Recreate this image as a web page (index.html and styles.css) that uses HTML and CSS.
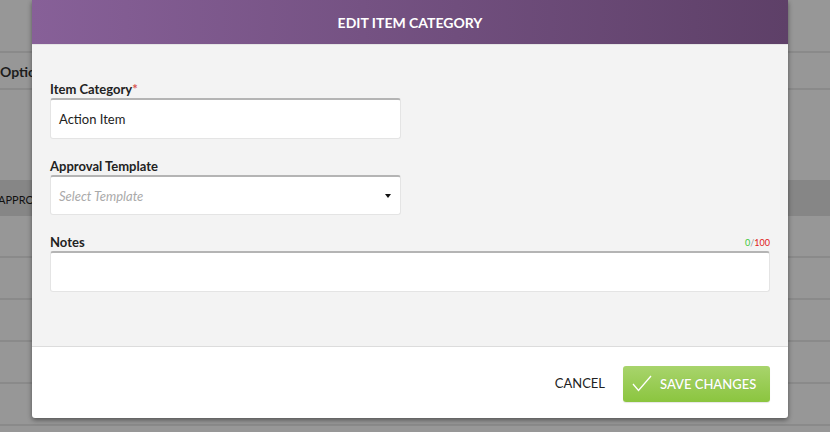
FILE: index.html
```html
<!DOCTYPE html>
<html>
<head>
<meta charset="utf-8">
<link rel="stylesheet" href="styles.css">
</head>
<body>
<div class="page">
  <div class="page-top"></div>
  <div class="page-row opt-row"><span class="cell">Options</span></div>
  <div class="page-gap"></div>
  <div class="page-row head-row"><span class="cell th">APPROVAL</span></div>
  <div class="page-row"></div>
  <div class="page-row"></div>
  <div class="page-row"></div>
  <div class="page-row"></div>
  <div class="page-row"></div>
</div>

<div class="modal">
  <div class="modal-header">EDIT ITEM CATEGORY</div>
  <div class="modal-body">
    <div class="field">
      <label class="label">Item Category<span class="req">*</span></label>
      <div class="input half"><span class="value">Action Item</span></div>
    </div>
    <div class="field">
      <label class="label">Approval Template</label>
      <div class="input half select">
        <span class="placeholder">Select Template</span>
        <span class="caret"></span>
      </div>
    </div>
    <div class="field">
      <div class="label-row">
        <label class="label">Notes</label>
        <span class="counter"><span class="cur">0</span><span class="sep">/</span><span class="max">100</span></span>
      </div>
      <div class="input full"></div>
    </div>
  </div>
  <div class="modal-footer">
    <span class="cancel">CANCEL</span>
    <button class="save">
      <svg class="check" width="20" height="17" viewBox="0 0 20 17"><polyline points="1,9 6.5,15.5 19,1" fill="none" stroke="#fff" stroke-width="1.3"/></svg>
      <span>SAVE CHANGES</span>
    </button>
  </div>
</div>
</body>
</html>
```

FILE: styles.css
```css
html, body {
  margin: 0;
  padding: 0;
}
body {
  width: 830px;
  height: 432px;
  overflow: hidden;
  background: #979797;
  font-family: Lato, "Open Sans", sans-serif;
  position: relative;
}
.page {
  display: flex;
  flex-direction: column;
}
.page-top {
  height: 53px;
  border-bottom: 2px solid #8a8a8a;
  box-sizing: border-box;
}
.page-row {
  height: 42px;
  border-bottom: 2px solid #8a8a8a;
  box-sizing: border-box;
  display: flex;
  align-items: center;
}
.cell {
  width: 32px;
  overflow: hidden;
  white-space: nowrap;
  font-size: 14px;
  font-weight: 700;
  color: #1d1d1d;
  margin-top: 1px;
}
.opt-row {
  height: 37px;
}
.page-gap {
  height: 90px;
}
.head-row {
  height: 36px;
  background: #868686;
  border-bottom: none;
}
.th {
  font-size: 11px;
  font-weight: 400;
  color: #111;
  margin-top: 2px;
  text-indent: -2px;
}
.modal {
  position: absolute;
  left: 32px;
  top: 0;
  width: 756px;
  height: 418px;
  background: #fff;
  border-radius: 0 0 3px 3px;
  box-shadow: 0 2px 5px rgba(0,0,0,0.45);
  display: flex;
  flex-direction: column;
  overflow: hidden;
}
.modal-header {
  height: 45px;
  background: linear-gradient(to right, #876098, #5e4068);
  color: #fff;
  font-weight: 700;
  font-size: 14px;
  display: flex;
  align-items: center;
  justify-content: center;
  border-bottom: 1px solid #e4e4e4;
  box-sizing: border-box;
}
.modal-body {
  height: 302px;
  background: #f3f3f3;
  padding: 35px 18px 0;
  box-sizing: border-box;
  border-bottom: 1px solid #dcdcdc;
  display: flex;
  flex-direction: column;
  gap: 18px;
}
.field {
  display: flex;
  flex-direction: column;
}
.label {
  font-size: 13px;
  font-weight: 700;
  color: #222;
  height: 18px;
  line-height: 18px;
}
.req {
  color: #d9534f;
}
.label-row {
  display: flex;
  justify-content: space-between;
  align-items: flex-end;
}
.counter {
  font-size: 9px;
  line-height: 12px;
  margin-bottom: 2px;
}
.cur { color: #3cc83c; }
.sep { color: #999; }
.max { color: #e02020; }
.input {
  height: 41px;
  background: #fff;
  border: 1px solid #e4e4e4;
  border-top: 2px solid #b4b4b4;
  border-radius: 3px;
  box-sizing: border-box;
  display: flex;
  align-items: center;
  padding: 0 8px;
  font-size: 13px;
  color: #222;
}
.half {
  width: 351px;
}
.select {
  height: 40px;
  position: relative;
}
.full {
  width: 720px;
}
.placeholder {
  color: #aaa;
  font-style: italic;
}
.caret {
  position: absolute;
  right: 9px;
  top: 17px;
  width: 0;
  height: 0;
  border-left: 3.5px solid transparent;
  border-right: 3.5px solid transparent;
  border-top: 4px solid #111;
}
.modal-footer {
  flex: 1;
  display: flex;
  align-items: center;
  justify-content: flex-end;
  padding: 0 18px 0 0;
  gap: 18px;
}
.cancel {
  font-size: 13px;
  color: #222;
  margin-top: 1px;
}
.save {
  width: 147px;
  height: 36px;
  border: none;
  border-radius: 3px;
  background: linear-gradient(#a8d46c, #8bc53f);
  color: #fff;
  font-family: Lato, "Open Sans", sans-serif;
  font-size: 13px;
  font-weight: 600;
  display: flex;
  align-items: center;
  padding: 0 0 0 9px;
  gap: 8px;
  text-shadow: 0 0 1px rgba(0,0,0,0.15);
  box-shadow: 0 1px 1px rgba(0,0,0,0.1);
  margin-top: 2px;
}
.check {
  display: block;
}
```
